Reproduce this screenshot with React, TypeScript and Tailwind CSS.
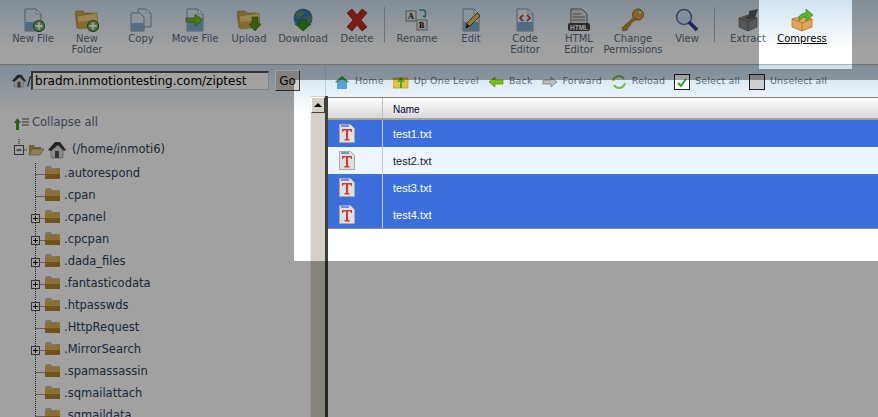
import React from "react";

const font = { verdana: "font-['DejaVu_Sans',sans-serif]" };

function Page({ children, fill = "#dfe9f4" }: { children?: React.ReactNode; fill?: string }) {
  return (
    <>
      <path d="M4 1h11l5 5v17H4z" fill={fill} stroke="#7f93a8" strokeWidth="1" />
      <path d="M15 1v5h5z" fill="#fff" stroke="#7f93a8" strokeWidth=".7" />
      <path d="M4.500 14h15v8.500h-15z" fill="#5f95c6" opacity=".75" />
      {children}
    </>
  );
}

function Folder() {
  return (
    <>
      <path d="M0 5l1-2h7l2 2h9v15H2z" fill="#c9a850" stroke="#8c6f2d" strokeWidth=".5" />
      <path d="M2 8l20-3 1 13-19 3z" fill="#f5d27a" stroke="#a5842f" strokeWidth=".6" />
      <path d="M3 14l20-2 0 6-19 3z" fill="#d8a94a" />
    </>
  );
}

function Plus() {
  return (
    <>
      <circle cx="18" cy="18" r="5.500" fill="#7fb86a" stroke="#2f6b2a" strokeWidth="1.200" />
      <path d="M18 14.500v7M14.500 18h7" stroke="#fff" strokeWidth="1.800" />
    </>
  );
}

const icons: Record<string, React.ReactNode> = {
  newFile: (<><Page /><Plus /></>),
  newFolder: (<><Folder /><Plus /></>),
  copy: (
    <>
      <path d="M9 1h8l5 4v14H9z" fill="#dfe9f4" stroke="#7f93a8" />
      <path d="M17 1v4h5z" fill="#fff" stroke="#7f93a8" strokeWidth=".6" />
      <path d="M2 5h9l4 4v14H2z" fill="#dfe9f4" stroke="#7f93a8" />
      <path d="M2.500 15h12v7.500h-12z" fill="#5f95c6" opacity=".7" />
    </>
  ),
  move: (<><Page /><path d="M3 10h9V6l8 6-8 6v-4H3z" fill="#6fc21e" stroke="#3f7f10" strokeWidth=".7" /></>),
  upload: (<><Folder /><path d="M15 9h6v7h3l-6 7-6-7h3z" fill="#4d9a1c" stroke="#2e6b10" strokeWidth=".6" /></>),
  download: (
    <>
      <circle cx="12" cy="10" r="9.500" fill="#3c78b5" />
      <path d="M5 6c3-3 7-3 8-1s-3 2-4 4-4 2-4-3zM15 9l5-1-1 6-3 1z" fill="#63904f" />
      <path d="M8 12h8v4h4l-8 7-8-7h4z" fill="#3c9417" stroke="#22620c" strokeWidth=".6" />
    </>
  ),
  del: <path d="M2 5l5-4 5 6 5-6 5 4-6 7 6 7-5 4-5-6-5 6-5-4 6-7z" fill="#c22b20" stroke="#7e1610" strokeWidth=".7" />,
  rename: (
    <>
      <rect x="1" y="3" width="10" height="10" fill="#e8e8e8" stroke="#888" />
      <rect x="12" y="12" width="10" height="10" fill="#e8e8e8" stroke="#888" />
      <text x="3" y="11" fontSize="8" fontWeight="700" fontFamily="Liberation Serif">A</text>
      <text x="14" y="20" fontSize="8" fontWeight="700" fontFamily="Liberation Serif">B</text>
      <path d="M14 2h4c3 0 3 4 2 7l-2-1" fill="none" stroke="#2f9a8a" strokeWidth="1.500" />
    </>
  ),
  edit: (<><Page /><path d="M7 20l1-5L18 5l3 3-10 10z" fill="#e8c440" stroke="#333" strokeWidth=".8" /><path d="M7 20l1-4 3 2z" fill="#222" /></>),
  code: (
    <>
      <Page fill="#e9eef4" />
      <path d="M10 7l-3 3 3 3M14 7l3 3-3 3" fill="none" stroke="#c8281e" strokeWidth="1.600" />
    </>
  ),
  html: (
    <>
      <path d="M4 1h11l5 5v11H4z" fill="#d8d8d8" stroke="#666" />
      <path d="M6 6h8M6 9h12M6 12h12" stroke="#777" />
      <rect x="1" y="15" width="22" height="8" rx="2" fill="#444" />
      <text x="3" y="22" fontSize="6.500" fontWeight="700" fill="#fff" fontFamily="Liberation Sans">HTML</text>
    </>
  ),
  perms: (
    <>
      <circle cx="17" cy="6.500" r="5.500" fill="#d9a441" stroke="#8c6416" />
      <circle cx="19" cy="4.500" r="1.800" fill="#efe5c8" stroke="#8c6416" strokeWidth=".5" />
      <path d="M13 9L1 20l1 3 4-1 1-3 2-1 1-3 6-4z" fill="#c88d2b" stroke="#8c6416" strokeWidth=".7" />
    </>
  ),
  view: (
    <>
      <circle cx="9" cy="9" r="7.500" fill="#cfe0f4" stroke="#5a6fa8" strokeWidth="1.500" />
      <path d="M14 14l8 8" stroke="#2d3b8c" strokeWidth="3.500" />
    </>
  ),
  extract: (
    <>
      <path d="M3 10l9-3 9 3v9l-9 4-9-4z" fill="#8a8a8a" stroke="#555" strokeWidth=".6" />
      <path d="M3 10l9 4 9-4M12 14v9" fill="none" stroke="#555" strokeWidth=".8" />
      <path d="M8 10l5-3V3l9-2-3 9-6 2z" fill="#5a5a5a" />
    </>
  ),
  compress: (
    <>
      <path d="M2 11l10-3 10 3v8l-10 4-10-4z" fill="#e0a75a" stroke="#a96b22" strokeWidth=".7" />
      <path d="M2 11l10 4 10-4M12 15v8" fill="none" stroke="#a96b22" strokeWidth=".8" />
      <path d="M9 13c-1-6 3-8 7-8V1l7 6-7 6V9c-3 0-5 1-7 4z" fill="#55b52a" stroke="#2f7d14" strokeWidth=".6" />
    </>
  ),
};

const tools = [
  { icon: "newFile", label: "New File" },
  { icon: "newFolder", label: "New\nFolder" },
  { icon: "copy", label: "Copy" },
  { icon: "move", label: "Move File" },
  { icon: "upload", label: "Upload" },
  { icon: "download", label: "Download" },
  { icon: "del", label: "Delete" },
];
const tools2 = [
  { icon: "rename", label: "Rename" },
  { icon: "edit", label: "Edit" },
  { icon: "code", label: "Code\nEditor" },
  { icon: "html", label: "HTML\nEditor" },
  { icon: "perms", label: "Change\nPermissions" },
  { icon: "view", label: "View" },
];

function Tool({ icon, label, active }: { icon: string; label: string; active?: boolean }) {
  return (
    <div className="flex w-[54px] shrink-0 flex-col items-center">
      <svg viewBox="0 0 24 24" className="h-[24px] w-[24px]">
        {icons[icon]}
      </svg>
      <div
        className={
          active
            ? "mt-[1px] whitespace-nowrap text-center text-[10px] leading-[11px] text-black underline"
            : "mt-[1px] whitespace-pre text-center text-[10px] leading-[11px] text-[#5c6c7c]"
        }
      >
        {label}
      </div>
    </div>
  );
}

function NavItem({ label, children, className = "mr-[9px]" }: { label: string; children: React.ReactNode; className?: string }) {
  return (
    <div className={"flex items-center gap-[5px] " + className}>
      <svg viewBox="0 0 16 16" className="h-[16px] w-[16px] shrink-0">
        {children}
      </svg>
      <span className="whitespace-nowrap text-[9.500px] tracking-[0.15px] text-[#5d6b76]">{label}</span>
    </div>
  );
}

function HouseIcon({ className }: { className: string }) {
  return (
    <svg viewBox="0 0 18 18" className={className}>
      <path d="M3 9l6-5 6 5v8H3z" fill="#dcdcdc" stroke="#777" strokeWidth=".5" />
      <path d="M0 9l7-8h5l6 8-2 1-6-6-7 6z" fill="#3a3a3a" />
      <rect x="7" y="10" width="4" height="7" fill="#555" />
    </svg>
  );
}

const tree = [
  { name: ".autorespond" },
  { name: ".cpan" },
  { name: ".cpanel", plus: true },
  { name: ".cpcpan", plus: true },
  { name: ".dada_files", plus: true },
  { name: ".fantasticodata", plus: true },
  { name: ".htpasswds", plus: true },
  { name: ".HttpRequest" },
  { name: ".MirrorSearch", plus: true },
  { name: ".spamassassin" },
  { name: ".sqmailattach" },
  { name: ".sqmaildata" },
];

function TreeRow({ name, plus }: { name: string; plus?: boolean }) {
  return (
    <div className="flex h-[22px] shrink-0 items-center pl-[30px]">
      <svg viewBox="0 0 15 22" className="h-[22px] w-[15px] shrink-0">
        <path d="M5.500 0v22M5.500 11.500h9" stroke="#333" strokeDasharray="1 1" fill="none" />
        {plus && (
          <>
            <rect x="1.500" y="7.500" width="8" height="8" fill="#fff" stroke="#555" />
            <path d="M3 11.500h5M5.500 9v5" stroke="#000" />
          </>
        )}
      </svg>
      <svg viewBox="0 0 15 13" className="mb-[3px] h-[13px] w-[15px] shrink-0">
        <path d="M0 2l1-2h5l1 2h8v11H0z" fill="#c8bc9c" />
        <path d="M0 3h15v10H0z" fill="#e0b050" />
        <path d="M0 8h15v5H0z" fill="#b08428" />
      </svg>
      <span className="ml-[4px] text-[11.500px] text-[#2b3f60]">{name}</span>
    </div>
  );
}

function TextFileIcon() {
  return (
    <svg viewBox="0 0 16 19" className="h-[19px] w-[16px]">
      <path d="M.500.500h11l4 4v14H.500z" fill="#e0e0e0" stroke="#a8a8a8" />
      <path d="M2 2h8" stroke="#4a78d8" strokeWidth="1.500" />
      <path d="M3 5h10v3h-1l-.5-1.500H9v8.500h1.500v1.500h-5V15H7V6.500H4.500L4 8H3z" fill="#d9362a" />
    </svg>
  );
}

const files = [
  { name: "test1.txt", selected: true },
  { name: "test2.txt", selected: false },
  { name: "test3.txt", selected: true },
  { name: "test4.txt", selected: true },
];

export default function App() {
  return (
    <div className={"relative flex h-[417px] w-[878px] flex-col overflow-hidden bg-white " + font.verdana}>
      {/* toolbar */}
      <div className="flex h-[65px] shrink-0 border-b border-[#b4b4b4] bg-gradient-to-b from-[#cfe2f1] to-white to-[75%] pt-[8px] pl-[6px]">
        {tools.map((t) => (
          <Tool key={t.icon} {...t} />
        ))}
        <div className="mt-[-1px] h-[35px] w-px shrink-0 bg-[#a8b4bc]" />
        <div className="ml-[5px] flex">
          {tools2.map((t) => (
            <Tool key={t.icon} {...t} />
          ))}
        </div>
        <div className="mt-[-1px] h-[35px] w-px shrink-0 bg-[#a8b4bc]" />
        <div className="ml-[6px] flex">
          <Tool icon="extract" label="Extract" />
          <Tool icon="compress" label="Compress" active />
        </div>
      </div>

      <div className="flex min-h-0 flex-1 flex-col bg-[linear-gradient(#cbe0f0,#fff_48px,#fff)]">
        {/* address and navigation */}
        <div className="flex h-[31px] shrink-0 items-center">
          <div className="flex h-full w-[326px] shrink-0 items-center border-r border-[#c4ccd2] pl-[12px]">
            <HouseIcon className="h-[14px] w-[14px] shrink-0" />
            <span className="ml-[1px] text-[12px] text-black">/</span>
            <div className="flex h-[19px] w-[238px] shrink-0 items-center border border-t-2 border-l-2 border-[#555] border-r-[#ccc] border-b-[#ccc] bg-white pl-[2px] text-[12px] whitespace-nowrap text-black">
              bradm.inmotiontesting.com/ziptest
            </div>
            <div className="ml-[6px] flex h-[21px] w-[25px] shrink-0 items-center justify-center border border-t-white border-l-white border-r-[#404040] border-b-[#404040] bg-[#d4d0c8] text-[12px] text-black">
              Go
            </div>
          </div>
          <div className="flex items-center pt-[2px] pl-[8px]">
            <NavItem label="Home">
              <path d="M1 8l7-6 7 6-2 1v6H3V9z" fill="#5aa0d8" />
              <path d="M1 8l7-6 7 6-3 0-4-3-4 3z" fill="#3f9a4a" />
            </NavItem>
            <NavItem label="Up One Level">
              <path d="M0 4h15v10H0z" fill="#e8c040" stroke="#a88a20" strokeWidth=".6" />
              <path d="M7 14V8H4l4-5 4 5H9v6z" fill="#4fa81e" />
            </NavItem>
            <NavItem label="Back">
              <path d="M1 8l6-5v3h8v4H7v3z" fill="#77c800" stroke="#3f7f10" strokeWidth=".6" />
            </NavItem>
            <NavItem label="Forward">
              <path d="M15 8L9 3v3H1v4h8v3z" fill="#bcbcbc" stroke="#666" strokeWidth=".6" />
            </NavItem>
            <NavItem label="Reload">
              <path d="M2 7a6 6 0 0 1 11-2M14 9a6 6 0 0 1-11 2" fill="none" stroke="#79b84a" strokeWidth="2" />
            </NavItem>
            <NavItem label="Select all">
              <rect x=".500" y=".500" width="15" height="15" fill="#fff" stroke="#222" />
              <path d="M4 9l3 3 5-7" fill="none" stroke="#2d9a2d" strokeWidth="2" />
            </NavItem>
            <NavItem label="Unselect all" className="">
              <rect x=".500" y=".500" width="15" height="15" fill="#cfcfcf" stroke="#222" />
            </NavItem>
          </div>
        </div>

        {/* tree and file list */}
        <div className="flex min-h-0 flex-1">
          <div className="flex w-[310px] shrink-0 flex-col overflow-hidden pt-[18px]">
            <div className="flex h-[18px] shrink-0 items-center pl-[13px]">
              <svg viewBox="0 0 16 13" className="h-[13px] w-[16px] shrink-0">
                <path d="M4.500 1L8 6H6v7H3V6H1z" fill="#3f9a1e" />
                <path d="M9 2h7M9 5h7M9 8h7" stroke="#555" />
              </svg>
              <span className="ml-[3px] text-[11.500px] text-[#5f6c88]">Collapse all</span>
            </div>
            <div className="mt-[7px] flex h-[22px] shrink-0 items-center pl-[14px]">
              <svg viewBox="0 0 14 22" className="h-[22px] w-[14px] shrink-0">
                <rect x=".500" y="6.500" width="9" height="9" fill="#fff" stroke="#555" />
                <path d="M2.500 11h5" stroke="#000" />
                <path d="M5 0v6M10 11h4" stroke="#333" strokeDasharray="1 1" />
              </svg>
              <svg viewBox="0 0 16 12" className="h-[12px] w-[16px] shrink-0">
                <path d="M1 11V1h5l1 2h6v2H4z" fill="#b69a56" />
                <path d="M1 11l3-6h12l-4 6z" fill="#e4c98a" stroke="#8c6f2d" strokeWidth=".6" />
              </svg>
              <HouseIcon className="ml-[4px] h-[18px] w-[18px] shrink-0" />
              <span className="ml-[6px] text-[11.500px] text-[#2b3f60]">(/home/inmoti6)</span>
            </div>
            <div className="mt-[2px] flex flex-col">
              {tree.map((r) => (
                <TreeRow key={r.name} {...r} />
              ))}
            </div>
          </div>

          <div className="flex w-[18px] shrink-0 flex-col border-r-[3px] border-l border-r-[#404040] border-l-[#f0f0ec] bg-[#d4d0c8] pt-[1px]">
            <div className="flex h-[16px] shrink-0 items-center justify-center border border-t-white border-l-white border-r-[#404040] border-b-[#404040] bg-[#d4d0c8]">
              <div className="h-0 w-0 border-x-[4px] border-b-[4px] border-x-transparent border-b-black" />
            </div>
          </div>

          <div className="flex min-w-0 flex-1 flex-col pt-[1px]">
            <div className="flex h-[23px] shrink-0 border-t border-b-2 border-t-[#808080] border-b-[#a0a0a0] bg-gradient-to-b from-white to-[#d8d8d8]">
              <div className="w-[55px] shrink-0 border-r border-[#c0c0c0]" />
              <div className="flex items-center pt-[2px] pl-[10px] font-['Liberation_Sans',sans-serif] text-[10px] text-[#000040]">Name</div>
            </div>
            {files.map((f) => (
              <div
                key={f.name}
                className={
                  f.selected
                    ? "flex h-[27px] shrink-0 bg-[#3c6fdb] text-white"
                    : "flex h-[27px] shrink-0 bg-[#edf5fe] text-[#222]"
                }
              >
                <div className="flex w-[55px] shrink-0 items-center border-r border-[#c8c8c8] pl-[11px]">
                  <TextFileIcon />
                </div>
                <div className="flex items-center pt-[2px] pl-[10px] font-['Liberation_Sans',sans-serif] text-[11px]">{f.name}</div>
              </div>
            ))}
            <div className="h-px shrink-0 bg-[#909090]" />
          </div>
        </div>
      </div>

      {/* dim layer around the highlighted areas */}
      <div className="absolute top-0 left-0 h-[69px] w-[759px] bg-black/[0.37]" />
      <div className="absolute top-0 left-[852px] h-[69px] w-[26px] bg-black/[0.37]" />
      <div className="absolute top-[69px] left-0 h-[11px] w-[878px] bg-black/[0.37]" />
      <div className="absolute top-[80px] left-0 h-[181px] w-[294px] bg-black/[0.37]" />
      <div className="absolute top-[261px] left-0 h-[156px] w-[878px] bg-black/[0.37]" />
    </div>
  );
}
